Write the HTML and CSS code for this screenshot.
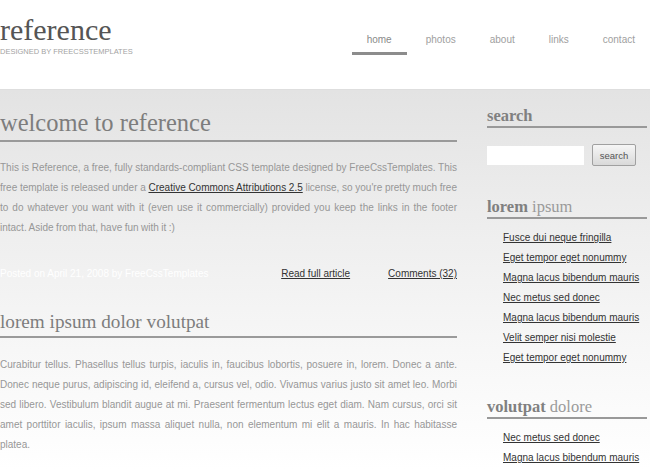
FILE: index.html
```html
<!DOCTYPE html>
<html lang="en">
<head>
<meta charset="utf-8">
<title>Reference</title>
<link rel="stylesheet" href="styles.css">
</head>
<body>
<div class="header">
  <div class="logo">
    <h1 class="logo-title">reference</h1>
    <p class="logo-sub">Designed by FreeCssTemplates</p>
  </div>
  <ul class="nav">
    <li><a class="nav-link active" href="#">home</a></li>
    <li><a class="nav-link" href="#">photos</a></li>
    <li><a class="nav-link" href="#">about</a></li>
    <li><a class="nav-link" href="#">links</a></li>
    <li><a class="nav-link" href="#">contact</a></li>
  </ul>
</div>
<div class="page">
  <div class="main">
    <div class="post">
      <h2 class="post-title">welcome to reference</h2>
      <p class="post-text tight">This is Reference, a free, fully standards-compliant CSS template designed by FreeCssTemplates. This free template is released under a <a class="text-link" href="#">Creative Commons Attributions 2.5</a> license, so you're pretty much free to do whatever you want with it (even use it commercially) provided you keep the links in the footer intact. Aside from that, have fun with it :)</p>
      <div class="post-meta">
        <span class="posted">Posted on April 21, 2008 by FreeCssTemplates</span>
        <span class="meta-links"><a class="text-link" href="#">Read full article</a><a class="text-link" href="#">Comments (32)</a></span>
      </div>
    </div>
    <div class="post">
      <h2 class="post-title small">lorem ipsum dolor volutpat</h2>
      <p class="post-text second">Curabitur tellus. Phasellus tellus turpis, iaculis in, faucibus lobortis, posuere in, lorem. Donec a ante. Donec neque purus, adipiscing id, eleifend a, cursus vel, odio. Vivamus varius justo sit amet leo. Morbi sed libero. Vestibulum blandit augue at mi. Praesent fermentum lectus eget diam. Nam cursus, orci sit amet porttitor iaculis, ipsum massa aliquet nulla, non elementum mi elit a mauris. In hac habitasse platea.</p>
    </div>
  </div>
  <div class="sidebar">
    <div class="box">
      <h3 class="box-title"><b>search</b></h3>
      <form class="search" onsubmit="return false;">
        <input class="search-input" type="text" aria-label="search">
        <button class="search-btn" type="submit">search</button>
      </form>
    </div>
    <div class="box gap">
      <h3 class="box-title"><b>lorem</b> ipsum</h3>
      <ul class="box-list">
        <li><a class="text-link" href="#">Fusce dui neque fringilla</a></li>
        <li><a class="text-link" href="#">Eget tempor eget nonummy</a></li>
        <li><a class="text-link" href="#">Magna lacus bibendum mauris</a></li>
        <li><a class="text-link" href="#">Nec metus sed donec</a></li>
        <li><a class="text-link" href="#">Magna lacus bibendum mauris</a></li>
        <li><a class="text-link" href="#">Velit semper nisi molestie</a></li>
        <li><a class="text-link" href="#">Eget tempor eget nonummy</a></li>
      </ul>
    </div>
    <div class="box gap last">
      <h3 class="box-title"><b>volutpat</b> dolore</h3>
      <ul class="box-list">
        <li><a class="text-link" href="#">Nec metus sed donec</a></li>
        <li><a class="text-link" href="#">Magna lacus bibendum mauris</a></li>
      </ul>
    </div>
  </div>
</div>
</body>
</html>
```

FILE: styles.css
```css
html, body {
  margin: 0;
  padding: 0;
  background: #fff;
}
body {
  font-family: "Liberation Sans", Arial, sans-serif;
  font-size: 10px;
  color: #979797;
  overflow: hidden;
}
.header {
  height: 89px;
  border-bottom: 1px solid #dedede;
  display: flex;
  justify-content: space-between;
  align-items: flex-start;
  background: #fff;
}
.logo {
  padding-top: 15px;
}
.logo-title {
  margin: 0;
  font-family: "Liberation Serif", Georgia, serif;
  font-weight: normal;
  font-size: 30px;
  line-height: 30px;
  color: #555;
}
.logo-sub {
  margin: 2px 0 0;
  font-size: 7.5px;
  line-height: 10px;
  text-transform: uppercase;
  color: #a3a3a3;
}
.nav {
  list-style: none;
  margin: 0;
  padding: 30px 0 0;
  display: flex;
  gap: 4px;
}
.nav-link {
  display: block;
  padding: 0 15px 2px;
  line-height: 20px;
  font-size: 10px;
  color: #a0a0a0;
  text-decoration: none;
  border-bottom: 3px solid transparent;
}
.nav-link.active {
  color: #8a8a8a;
  border-bottom-color: #8c8c8c;
}
.page {
  display: flex;
  gap: 30px;
  min-height: 380px;
  background: linear-gradient(to bottom, #e3e3e3 0, #efefef 150px, #f7f7f7 260px, #fff 380px);
}
.main {
  width: 457px;
}
.post-title {
  margin: 0;
  padding: 18px 0 2px;
  font-family: "Liberation Serif", Georgia, serif;
  font-weight: normal;
  font-size: 24.5px;
  line-height: 30px;
  color: #7d7d7d;
  border-bottom: 2px solid #9a9a9a;
}
.post-title.small {
  padding: 26px 0 2px;
  font-size: 19.2px;
  line-height: 24px;
}
.post-text {
  margin: 16px 0 0;
  line-height: 20px;
  text-align: justify;
}
.post-text.tight {
  word-spacing: -0.3px;
}
.post-text.second {
  margin-top: 17px;
}
.text-link {
  color: #333;
  text-decoration: underline;
}
.post-meta {
  margin-top: 26px;
  line-height: 20px;
  display: flex;
  justify-content: space-between;
}
.posted {
  color: #fff;
}
.meta-links {
  display: flex;
  gap: 38px;
  padding-right: 0;
}
.sidebar {
  width: 160px;
}
.box-title {
  margin: 0;
  padding: 16px 0 0;
  font-family: "Liberation Serif", Georgia, serif;
  font-weight: normal;
  font-size: 16.5px;
  line-height: 20px;
  color: #9a9a9a;
  border-bottom: 2px solid #999;
}
.box-title b {
  color: #808080;
}
.box.gap .box-title {
  padding-top: 0;
  margin-top: 31px;
}
.box.last .box-title {
  margin-top: 29px;
}
.search {
  margin: 16px 0 0;
  display: flex;
  align-items: center;
  gap: 8px;
}
.search-input {
  width: 97px;
  height: 19px;
  box-sizing: border-box;
  border: none;
  background: #fff;
  padding: 0 3px;
  margin: 0;
  font-size: 10px;
}
.search-btn {
  width: 44px;
  height: 22px;
  box-sizing: border-box;
  margin: 0;
  padding: 0;
  border: 1px solid #a0a0a0;
  border-radius: 2px;
  background: linear-gradient(to bottom, #f6f6f6, #d9d9d9);
  font-family: "Liberation Sans", Arial, sans-serif;
  font-size: 9.5px;
  color: #555;
}
.box-list {
  list-style: none;
  margin: 9px 0 0;
  padding: 0 0 0 16px;
  line-height: 20px;
}
```
